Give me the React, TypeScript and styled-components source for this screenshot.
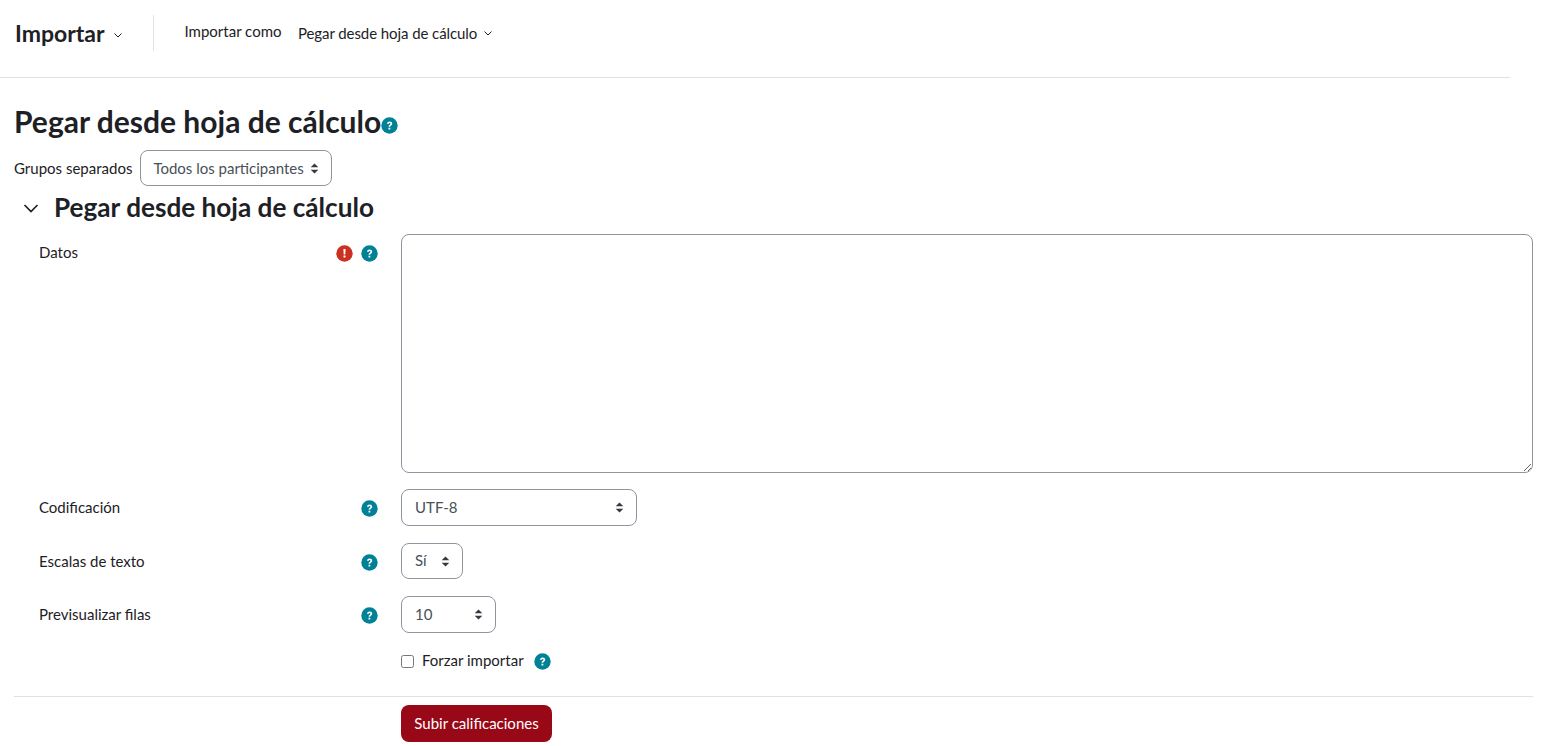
import React from "react";
import styled, { createGlobalStyle } from "styled-components";

const Global = createGlobalStyle`
  html, body { margin: 0; padding: 0; background: #fff; }
  body { font-family: Lato, "Liberation Sans", sans-serif; font-size: 15px; color: #1d2125; }
  #root { overflow: hidden; height: 746px; }
`;

const Page = styled.div`
  width: 1547px;
  height: 746px;
  overflow: hidden;
`;

const TopBar = styled.header`
  width: 1510px;
  height: 78px;
  border-bottom: 1px solid #dee2e6;
  display: flex;
  align-items: flex-start;
  padding-top: 15px;
  padding-left: 15px;
  box-sizing: border-box;
`;

const TopTitle = styled.div`
  display: flex;
  align-items: center;
  gap: 8px;
  height: 36px;
  width: 139px;
  box-sizing: border-box;
  border-right: 1px solid #dee2e6;
  font-size: 23px;
  font-weight: 700;
  line-height: 34px;
`;

const TopCaret = styled.span`
  display: flex;
  margin-top: 4px;
`;

const TopLabel = styled.span`
  margin-left: 30.5px;
  margin-top: 6px;
  line-height: 20px;
`;

const TopMenu = styled.span`
  display: flex;
  align-items: center;
  gap: 6px;
  margin-left: 16.5px;
  margin-top: 8px;
  line-height: 20px;
  letter-spacing: -0.08px;
`;

const Content = styled.main`
  padding: 0 14px;
  width: 1519px;
`;

const PageTitle = styled.h2`
  margin: 26px 0 0;
  display: flex;
  align-items: center;
  font-size: 30px;
  font-weight: 700;
  line-height: 32px;
  height: 36px;
`;

const PageTitleText = styled.span`
  padding-bottom: 2px;
`;

const GroupRow = styled.div`
  display: flex;
  align-items: center;
  gap: 8px;
  margin-top: 10px;
  height: 36px;
`;

const SectionHeader = styled.div`
  display: flex;
  align-items: center;
  height: 48px;
  padding-left: 9px;
  padding-bottom: 4px;
  box-sizing: border-box;
`;

const SectionTitle = styled.h3`
  margin: -2px 0 0 15px;
  font-size: 26.15px;
  font-weight: 700;
  line-height: 32px;
`;

const Row = styled.div<{ $height: number; $top: number }>`
  display: flex;
  align-items: flex-start;
  height: ${(p) => p.$height}px;
  margin-top: ${(p) => p.$top}px;
`;

const LabelCol = styled.div`
  width: 387px;
  flex: none;
  display: flex;
  align-items: center;
  height: 37px;
  padding-left: 25px;
  padding-right: 23px;
  box-sizing: border-box;
`;

const LabelText = styled.span`
  flex: 1;
  padding-bottom: 2px;
`;

const LabelIcons = styled.span`
  display: flex;
  gap: 8px;
  padding-top: 2px;
`;

const DataArea = styled.textarea`
  width: 1132px;
  height: 239px;
  box-sizing: border-box;
  border: 1px solid #8f959e;
  border-radius: 8px;
  background: #fff;
  display: block;
  margin: 0;
  padding: 6px 12px;
  font: inherit;
  outline: none;
`;

const Select = styled.div<{ $width: number; $height?: number; $pad?: number }>`
  width: ${(p) => p.$width}px;
  height: ${(p) => p.$height ?? 37}px;
  box-sizing: border-box;
  flex: none;
  border: 1px solid #8f959e;
  border-radius: 8px;
  background: #fff;
  color: #495057;
  display: flex;
  align-items: center;
  justify-content: space-between;
  padding: 0 12px 0 ${(p) => p.$pad ?? 13}px;
`;

const SelectValue = styled.span<{ $lift?: number }>`
  padding-bottom: ${(p) => p.$lift ?? 2}px;
`;

const CheckRow = styled.div`
  display: flex;
  align-items: center;
  height: 24px;
  margin-top: 16px;
  margin-left: 387px;
`;

const Check = styled.input`
  appearance: none;
  width: 13px;
  height: 13px;
  box-sizing: border-box;
  margin: 0 8px 0 0;
  border: 1px solid #767676;
  border-radius: 2.5px;
  background: #fff;
`;

const CheckLabel = styled.label`
  margin-right: 10px;
  padding-bottom: 2px;
`;

const Divider = styled.hr`
  margin: 23px 0 0;
  border: 0;
  border-top: 1px solid #dee2e6;
`;

const Submit = styled.button`
  display: block;
  margin: 8px 0 0 387px;
  width: 151px;
  height: 37px;
  background: #980816;
  color: #fff;
  border: 0;
  border-radius: 8px;
  padding: 0 0 2px;
  font: inherit;
`;

const TitleHelp = styled.span`
  display: flex;
  margin-top: 7px;
`;

const Badge = ({ color, mark }: { color: string; mark: "?" | "!" }) => (
  <svg width="17" height="17" viewBox="0 0 17 17" style={{ display: "block" }}>
    <circle cx="8.5" cy="8.5" r="8.2" fill={color} />
    {mark === "?" ? (
      <path
        d="M6 6.7c.2-1.3 1.2-2.1 2.6-2.1 1.5 0 2.6.9 2.6 2.1 0 1-.6 1.5-1.3 2-.5.3-.7.6-.7 1.1H7.6c0-1 .4-1.5 1.1-2 .5-.3.8-.6.8-1 0-.5-.4-.8-.9-.8-.6 0-1 .4-1.1 1L6 6.7zM7.5 10.7h1.8v1.7H7.5z"
        fill="#fff"
      />
    ) : (
      <path d="M7.4 4h2.2l-.3 5.6H7.7L7.4 4zM7.5 10.6h2v1.9h-2z" fill="#fff" />
    )}
  </svg>
);

const Help = () => <Badge color="#008196" mark="?" />;
const Alert = () => <Badge color="#ca3120" mark="!" />;

const Caret = () => (
  <svg width="10" height="10" viewBox="0 0 10 10" style={{ display: "block" }}>
    <path d="M1.5 3.5 5 7l3.5-3.5" fill="none" stroke="#1d2125" strokeWidth="1" />
  </svg>
);

const UpDown = () => (
  <svg width="9" height="11" viewBox="0 0 9 11" style={{ display: "block" }}>
    <path d="M4.5.5 8.3 4.3H.7zM4.5 10.5.7 6.7h7.6z" fill="#343a40" />
  </svg>
);

const BigChevron = () => (
  <svg width="16" height="16" viewBox="0 0 16 16" style={{ display: "block" }}>
    <path d="M1.5 5 8 11.5 14.5 5" fill="none" stroke="#1d2125" strokeWidth="1.7" />
  </svg>
);

export default function App() {
  return (
    <Page>
      <Global />
      <TopBar>
        <TopTitle>
          Importar
          <TopCaret>
            <Caret />
          </TopCaret>
        </TopTitle>
        <TopLabel>Importar como</TopLabel>
        <TopMenu>
          Pegar desde hoja de cálculo <Caret />
        </TopMenu>
      </TopBar>
      <Content>
        <PageTitle>
          <PageTitleText>Pegar desde hoja de cálculo</PageTitleText>
          <TitleHelp>
            <Help />
          </TitleHelp>
        </PageTitle>
        <GroupRow>
          <span>Grupos separados</span>
          <Select $width={192} $height={36} $pad={12}>
            <SelectValue $lift={0}>Todos los participantes</SelectValue> <UpDown />
          </Select>
        </GroupRow>
        <SectionHeader>
          <BigChevron />
          <SectionTitle>Pegar desde hoja de cálculo</SectionTitle>
        </SectionHeader>
        <Row $height={239} $top={0}>
          <LabelCol>
            <LabelText>Datos</LabelText>
            <LabelIcons>
              <Alert />
              <Help />
            </LabelIcons>
          </LabelCol>
          <DataArea />
        </Row>
        <Row $height={37} $top={16}>
          <LabelCol>
            <LabelText>Codificación</LabelText>
            <LabelIcons>
              <Help />
            </LabelIcons>
          </LabelCol>
          <Select $width={236}>
            <SelectValue>UTF-8</SelectValue> <UpDown />
          </Select>
        </Row>
        <Row $height={36} $top={17}>
          <LabelCol>
            <LabelText>Escalas de texto</LabelText>
            <LabelIcons>
              <Help />
            </LabelIcons>
          </LabelCol>
          <Select $width={62} $height={36}>
            <SelectValue>Sí</SelectValue> <UpDown />
          </Select>
        </Row>
        <Row $height={37} $top={17}>
          <LabelCol>
            <LabelText>Previsualizar filas</LabelText>
            <LabelIcons>
              <Help />
            </LabelIcons>
          </LabelCol>
          <Select $width={95}>
            <SelectValue>10</SelectValue> <UpDown />
          </Select>
        </Row>
        <CheckRow>
          <Check type="checkbox" id="force" />
          <CheckLabel htmlFor="force">Forzar importar</CheckLabel>
          <Help />
        </CheckRow>
        <Divider />
        <Submit>Subir calificaciones</Submit>
      </Content>
    </Page>
  );
}
